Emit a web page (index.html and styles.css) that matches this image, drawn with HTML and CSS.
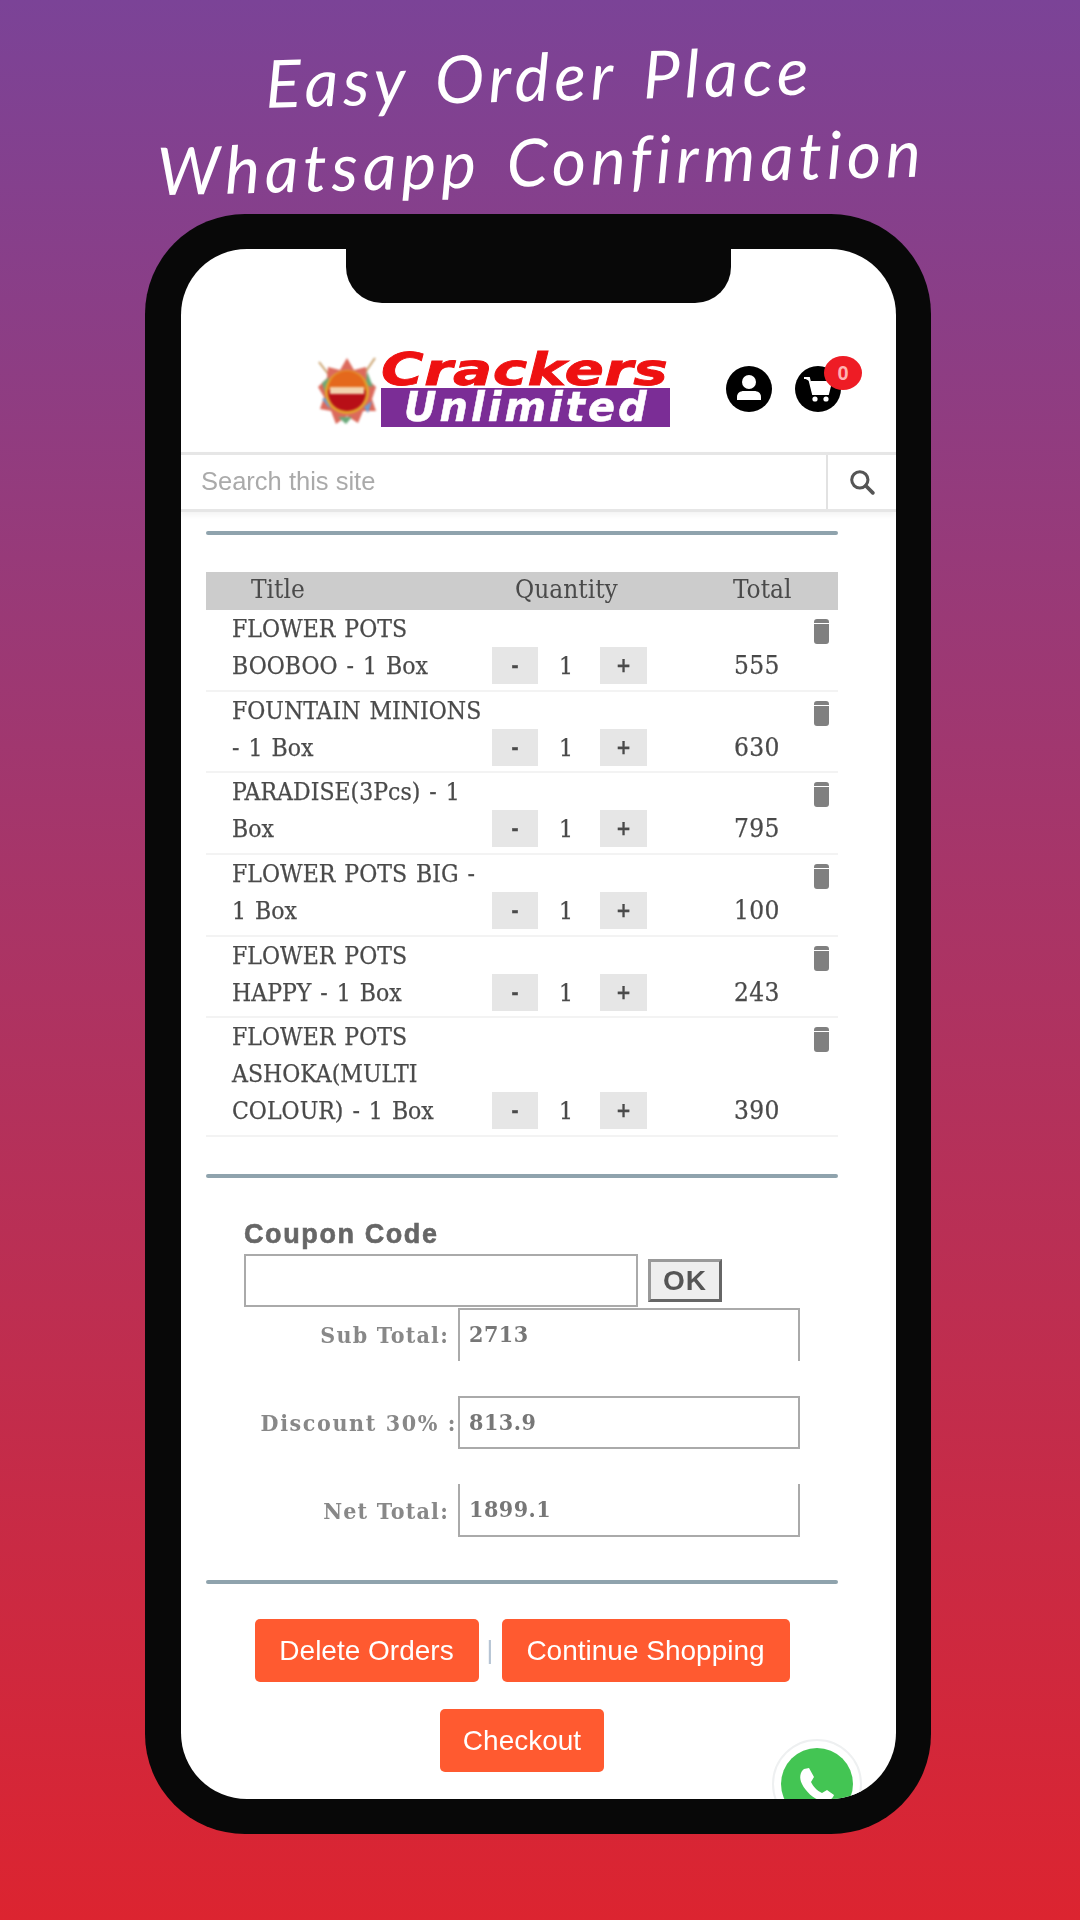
FILE: index.html
```html
<!DOCTYPE html>
<html lang="en">
<head>
<meta charset="utf-8">
<title>Easy Order Place</title>
<link rel="stylesheet" href="styles.css">
</head>
<body>
<h1 class="headline">Easy Order Place<br>Whatsapp Confirmation</h1>
<div class="phone">
  <div class="screen">
    <div class="notch"></div>
    <div class="content">
      <header class="top">
        <div class="logo">
          <svg class="logo-mark" viewBox="0 0 62 68">
            <path d="M3 5 16 22M59 1 46 20" stroke="#c9a06a" stroke-width="2"/>
            <path d="M31 1 38 13 50 10 51 22 60 30 56 42 60 54 47 54 42 66 31 59 20 67 15 54 4 52 8 40 2 30 11 21 12 10 24 13Z" fill="#dc6a5c"/>
            <path d="M6 26 13 20 10 38ZM51 14 57 30 50 28ZM22 60 30 67 36 60Z" fill="#6aa97a"/>
            <path d="M6 42 12 40 14 52ZM48 50 56 44 52 56Z" fill="#6f9ccf"/>
            <circle cx="31" cy="35" r="22" fill="#e3a32c"/>
            <circle cx="31" cy="35" r="19" fill="#b80f17"/>
            <path d="M12 33A19 19 0 0 1 50 33Z" fill="#e4681c"/>
            <rect x="14" y="30" width="34" height="7" fill="#f2d3ae"/>
          </svg>
          <div class="logo-type">
            <div class="logo-crackers">Crackers</div>
            <div class="logo-unlimited">Unlimited</div>
          </div>
        </div>
        <div class="account">
          <svg class="round-icon" viewBox="0 0 46 46">
            <circle cx="23" cy="23" r="23" fill="#000"/>
            <circle cx="23" cy="16" r="7" fill="#fff"/>
            <path d="M11 34V31C11 27 14 25 18 25H28C32 25 35 27 35 31V34Z" fill="#fff"/>
          </svg>
          <div class="cart">
            <svg class="round-icon" viewBox="0 0 46 46">
              <circle cx="23" cy="23" r="23" fill="#000"/>
              <path d="M9 12H14L18 28H33L36 16H16" fill="#fff" stroke="#fff" stroke-width="2"/>
              <circle cx="20" cy="33" r="2.6" fill="#fff"/>
              <circle cx="31" cy="33" r="2.6" fill="#fff"/>
            </svg>
            <span class="badge">0</span>
          </div>
        </div>
      </header>

      <div class="search">
        <div class="search-text">Search this site</div>
        <div class="search-btn">
          <svg class="search-icon" viewBox="0 0 24 24">
            <circle cx="10" cy="10" r="7.5" fill="none" stroke="#555" stroke-width="2.8"/>
            <path d="M15.5 15.5 22 22" stroke="#555" stroke-width="3.4" stroke-linecap="round"/>
          </svg>
        </div>
      </div>

      <main class="cart-body">
        <div class="rule rule-first"></div>
        <div class="table-head">
          <span class="th-title">Title</span>
          <span class="th-qty">Quantity</span>
          <span class="th-total">Total</span>
        </div>

        <div class="row">
          <div class="name">FLOWER POTS<br>BOOBOO - 1 Box</div>
          <div class="step">-</div><div class="qty">1</div><div class="step">+</div>
          <div class="sum">555</div>
          <svg class="bin" viewBox="0 0 17 25"><path d="M4 0H13Q16 0 16 3V4H1V3Q1 0 4 0ZM1 5H16V22Q16 25 13 25H4Q1 25 1 22Z"/></svg>
        </div>
        <div class="row">
          <div class="name">FOUNTAIN MINIONS<br>- 1 Box</div>
          <div class="step">-</div><div class="qty">1</div><div class="step">+</div>
          <div class="sum">630</div>
          <svg class="bin" viewBox="0 0 17 25"><path d="M4 0H13Q16 0 16 3V4H1V3Q1 0 4 0ZM1 5H16V22Q16 25 13 25H4Q1 25 1 22Z"/></svg>
        </div>
        <div class="row">
          <div class="name">PARADISE(3Pcs) - 1<br>Box</div>
          <div class="step">-</div><div class="qty">1</div><div class="step">+</div>
          <div class="sum">795</div>
          <svg class="bin" viewBox="0 0 17 25"><path d="M4 0H13Q16 0 16 3V4H1V3Q1 0 4 0ZM1 5H16V22Q16 25 13 25H4Q1 25 1 22Z"/></svg>
        </div>
        <div class="row">
          <div class="name">FLOWER POTS BIG -<br>1 Box</div>
          <div class="step">-</div><div class="qty">1</div><div class="step">+</div>
          <div class="sum">100</div>
          <svg class="bin" viewBox="0 0 17 25"><path d="M4 0H13Q16 0 16 3V4H1V3Q1 0 4 0ZM1 5H16V22Q16 25 13 25H4Q1 25 1 22Z"/></svg>
        </div>
        <div class="row">
          <div class="name">FLOWER POTS<br>HAPPY - 1 Box</div>
          <div class="step">-</div><div class="qty">1</div><div class="step">+</div>
          <div class="sum">243</div>
          <svg class="bin" viewBox="0 0 17 25"><path d="M4 0H13Q16 0 16 3V4H1V3Q1 0 4 0ZM1 5H16V22Q16 25 13 25H4Q1 25 1 22Z"/></svg>
        </div>
        <div class="row">
          <div class="name">FLOWER POTS<br>ASHOKA(MULTI<br>COLOUR) - 1 Box</div>
          <div class="step">-</div><div class="qty">1</div><div class="step">+</div>
          <div class="sum">390</div>
          <svg class="bin" viewBox="0 0 17 25"><path d="M4 0H13Q16 0 16 3V4H1V3Q1 0 4 0ZM1 5H16V22Q16 25 13 25H4Q1 25 1 22Z"/></svg>
        </div>

        <div class="rule rule-second"></div>

        <section class="coupon">
          <div class="coupon-label">Coupon Code</div>
          <div class="coupon-line">
            <div class="coupon-input"></div>
            <div class="ok">OK</div>
          </div>
        </section>

        <section class="totals">
          <div class="total-label">Sub Total:</div>
          <div class="total-box box-open-bottom">2713</div>
          <div class="total-label label-wide">Discount 30% :</div>
          <div class="total-box">813.9</div>
          <div class="total-label">Net Total:</div>
          <div class="total-box box-open-top">1899.1</div>
        </section>

        <div class="rule rule-third"></div>

        <div class="actions">
          <div class="btn btn-delete">Delete Orders</div>
          <span class="pipe">|</span>
          <div class="btn btn-continue">Continue Shopping</div>
        </div>
        <div class="actions actions-last">
          <div class="btn btn-checkout">Checkout</div>
        </div>
      </main>
    </div>
    <div class="wa">
      <svg viewBox="0 0 74 74" class="wa-icon">
        <circle cx="37" cy="37" r="36" fill="#43c553"/>
        <path d="M24 22C20 25 19 31 22 37 26 45 33 51 41 54 47 56 52 53 54 48L47 43 42 46C37 44 33 39 31 35L34 30 29 21Z" fill="#fff"/>
      </svg>
    </div>
  </div>
</div>
</body>
</html>
```

FILE: styles.css
```css
* { box-sizing: border-box; }
html, body { margin: 0; padding: 0; }
body {
  width: 1080px;
  height: 1920px;
  overflow: hidden;
  background: linear-gradient(180deg, #7b4397 0%, #dc2430 100%);
}
.headline {
  margin: 0;
  height: 214px;
  padding-top: 33px;
  text-align: center;
  color: #fff;
  font-family: "Lato", "Liberation Sans", sans-serif;
  font-style: italic;
  font-weight: 400;
  font-size: 66px;
  line-height: 85px;
  letter-spacing: 4.8px;
  word-spacing: 6px;
  font-variant-ligatures: none;
  transform: rotate(-1.4deg);
}
.phone {
  width: 786px;
  height: 1620px;
  margin-left: 145px;
  padding: 35px 35px 35px 36px;
  background: #080808;
  border-radius: 100px;
}
.screen {
  position: relative;
  width: 715px;
  height: 1550px;
  overflow: hidden;
  background: #fff;
  border-radius: 66px;
}
.notch {
  position: absolute;
  left: 165px;
  top: 0;
  width: 385px;
  height: 54px;
  background: #080808;
  border-radius: 0 0 36px 36px;
  z-index: 2;
}
.content { filter: blur(0.7px); }

/* header */
.top {
  display: flex;
  height: 203px;
  padding: 103px 0 0 135px;
}
.logo { display: flex; align-items: flex-start; width: 410px; }
.logo-mark { width: 62px; height: 68px; margin-top: 5px; flex: none; filter: blur(0.8px); }
.logo-type { width: 289px; margin-left: 3px; }
.logo-crackers {
  height: 36px;
  color: #ee1111;
  font: italic 700 44px/36px "DejaVu Sans", sans-serif;
  letter-spacing: 0.3px;
  white-space: nowrap;
  -webkit-text-stroke: 0.8px #ee1111;
  transform: scaleX(1.32);
  transform-origin: left center;
}
.logo-unlimited {
  height: 39px;
  padding-left: 23px;
  background: #7b2d96;
  color: #fff;
  font: italic 700 40px/39px "DejaVu Sans", sans-serif;
  letter-spacing: 3px;
  white-space: nowrap;
  -webkit-text-stroke: 0.5px #fff;
}
.account { display: flex; gap: 23px; margin-top: 13px; }
.round-icon { display: block; width: 46px; height: 48px; }
.cart { position: relative; }
.badge {
  position: absolute;
  left: 29px;
  top: -9px;
  width: 38px;
  height: 34px;
  border-radius: 50%;
  background: #ee1c25;
  color: #ffb3b3;
  font: 700 20px/34px "Liberation Sans", sans-serif;
  text-align: center;
}

/* search */
.search {
  display: flex;
  height: 60px;
  border-top: 3px solid #e6e6e6;
  border-bottom: 3px solid #e6e6e6;
  box-shadow: 0 3px 6px rgba(0, 0, 0, 0.05);
}
.search-text {
  flex: 1;
  padding-left: 20px;
  color: #aaa;
  font: 400 25.5px/52px "Liberation Sans", sans-serif;
}
.search-btn {
  display: flex;
  align-items: center;
  justify-content: center;
  width: 70px;
  border-left: 2px solid #e2e2e2;
}
.search-icon { width: 26px; height: 26px; }

/* cart */
.cart-body {
  width: 657px;
  padding: 0 0 0 25px;
  color: #4a4a4a;
  font-family: "DejaVu Serif Condensed", "DejaVu Serif", serif;
}
.rule { height: 4px; background: #8fa3ad; border-radius: 2px; }
.rule-first { margin-top: 19px; }
.rule-second { margin-top: 37px; }
.rule-third { margin-top: 43px; }
.table-head {
  display: flex;
  height: 38px;
  margin-top: 37px;
  background: #cccccc;
  font-size: 26px;
  line-height: 34px;
}
.th-title { margin-left: 45px; width: 264px; }
.th-qty { width: 218px; }
.row {
  display: grid;
  grid-template-columns: 286px 46px 62px 47px 87px 79px 17px;
  padding-bottom: 5.7px;
  border-bottom: 2px solid #f3f3f3;
  font-size: 24.5px;
  line-height: 37px;
  -webkit-text-stroke: 0.25px #4a4a4a;
}
.name { padding-left: 26px; white-space: nowrap; word-spacing: 2px; }
.step {
  align-self: end;
  height: 37px;
  background: #e6e6e6;
  text-align: center;
  font-size: 20px;
  font-weight: 700;
  line-height: 37px;
}
.qty { align-self: end; text-align: center; padding-right: 6px; }
.sum { grid-column: 6; align-self: end; font-size: 26px; letter-spacing: 0.4px; }
.bin { width: 17px; height: 25px; margin-top: 9px; fill: #808080; }

/* coupon */
.coupon { padding: 37px 0 0 38px; }
.coupon-label {
  height: 39px;
  color: #666;
  font: 700 27px/39px "Liberation Sans", sans-serif;
  letter-spacing: 1.6px;
  -webkit-text-stroke: 0.6px #666;
}
.coupon-line { display: flex; align-items: center; gap: 10px; }
.coupon-input { width: 394px; height: 53px; border: 2px solid #aaa; }
.ok {
  width: 74px;
  height: 43px;
  border: 3px solid #666;
  border-top-color: #999;
  border-left-color: #999;
  background: #eee;
  color: #555;
  text-align: center;
  font: 700 28px/37px "Liberation Sans", sans-serif;
  letter-spacing: 1px;
}
.totals {
  display: grid;
  grid-template-columns: 243px 342px;
  grid-auto-rows: 53px;
  row-gap: 35px;
  margin: 1px 0 0 9px;
  color: #777;
  font-weight: 700;
  font-size: 23px;
}
.total-label {
  padding-right: 9px;
  text-align: right;
  line-height: 53px;
  color: #888;
  white-space: nowrap;
  letter-spacing: 1.2px;
}
.label-wide { padding-right: 1px; letter-spacing: 1.6px; }
.total-box {
  padding-left: 9px;
  border: 2px solid #aaa;
  line-height: 47px;
  background: #fff;
  letter-spacing: 0.5px;
}
.box-open-bottom { border-bottom: none; }
.box-open-top { border-top: none; line-height: 50px; }

/* actions */
.actions {
  display: flex;
  justify-content: center;
  align-items: center;
  height: 63px;
  margin-top: 35px;
  font-family: "Liberation Sans", sans-serif;
}
.actions-last { margin-top: 27px; }
.btn {
  height: 63px;
  border-radius: 5px;
  background: #ff5a30;
  color: #fff;
  text-align: center;
  font-size: 28px;
  line-height: 63px;
}
.btn-delete { width: 224px; }
.btn-continue { width: 288px; }
.btn-checkout { width: 164px; }
.pipe { width: 23px; text-align: center; color: #b5c4d4; font-size: 26px; }

/* whatsapp */
.wa {
  position: absolute;
  left: 591px;
  top: 1490px;
  width: 90px;
  height: 90px;
  padding: 6px;
  border-radius: 50%;
  background: #fff;
  border: 2px solid #eef0f1;
  filter: blur(0.5px);
}
.wa-icon { display: block; width: 74px; height: 74px; }
```
